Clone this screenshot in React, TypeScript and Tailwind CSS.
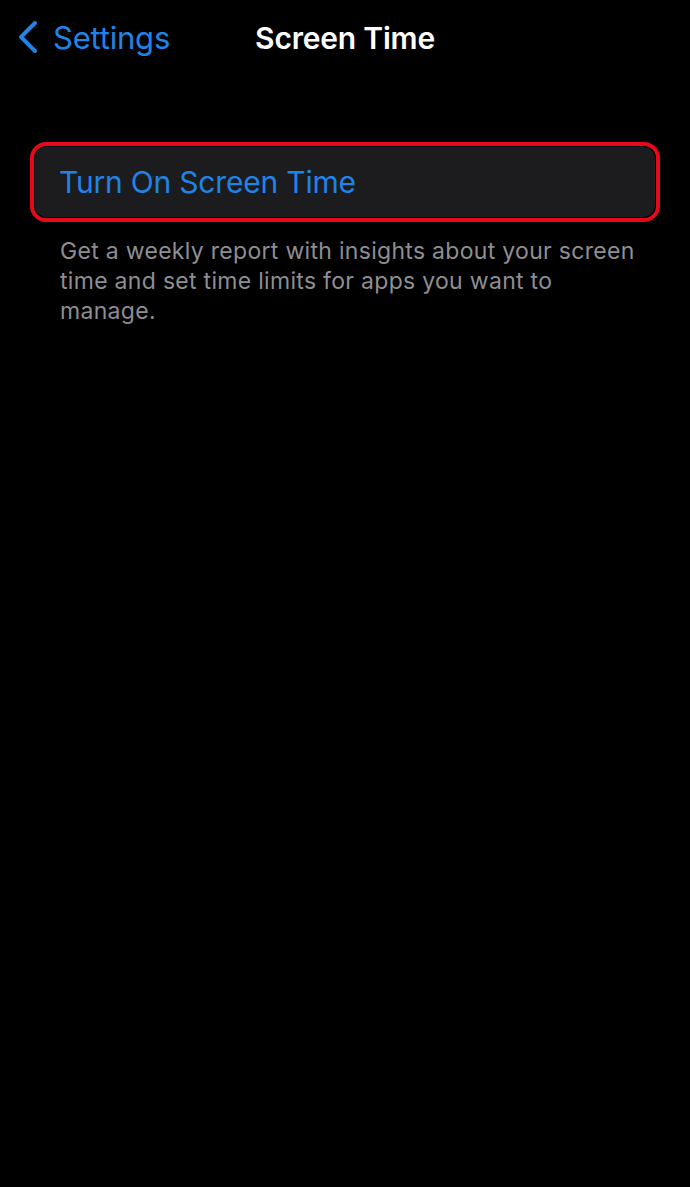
import React from "react";

const App: React.FC = () => {
  return (
    <div
      className="w-[690px] h-[1187px] bg-black text-white"
      style={{ fontFamily: "Inter, 'Noto Sans', sans-serif" }}
    >
      {/* Nav bar */}
      <div className="relative h-[76px] flex items-center justify-center">
        <button className="absolute left-[16px] top-[20px] flex items-center gap-[13px] text-[#1f84e6]">
          <svg width="24" height="34" viewBox="0 0 24 34" fill="none">
            <path
              d="M19 3 L5 17 L19 31"
              stroke="currentColor"
              strokeWidth="4"
              strokeLinecap="round"
              strokeLinejoin="round"
            />
          </svg>
          <span className="text-[31px] leading-none tracking-[-0.2px]">Settings</span>
        </button>
        <h1 className="text-[30px] font-semibold leading-none tracking-[-0.2px]">
          Screen Time
        </h1>
      </div>

      {/* Content */}
      <div className="px-[30px] pt-[66px]">
        <div className="rounded-[16px] border-[4px] border-[#e5091a] p-[1px]">
          <div className="h-[70px] rounded-[12px] bg-[#1c1c1e] flex items-center px-[24px]">
            <span className="text-[30px] text-[#1f84e6] tracking-[-0.2px] leading-none">
              Turn On Screen Time
            </span>
          </div>
        </div>
        <p className="mt-[14px] pl-[30px] pr-[20px] text-[23px] leading-[30px] text-[#8e8e93] tracking-[0.3px]">
          Get a weekly report with insights about your screen time and set time limits for apps you want to manage.
        </p>
      </div>
    </div>
  );
};

export default App;
